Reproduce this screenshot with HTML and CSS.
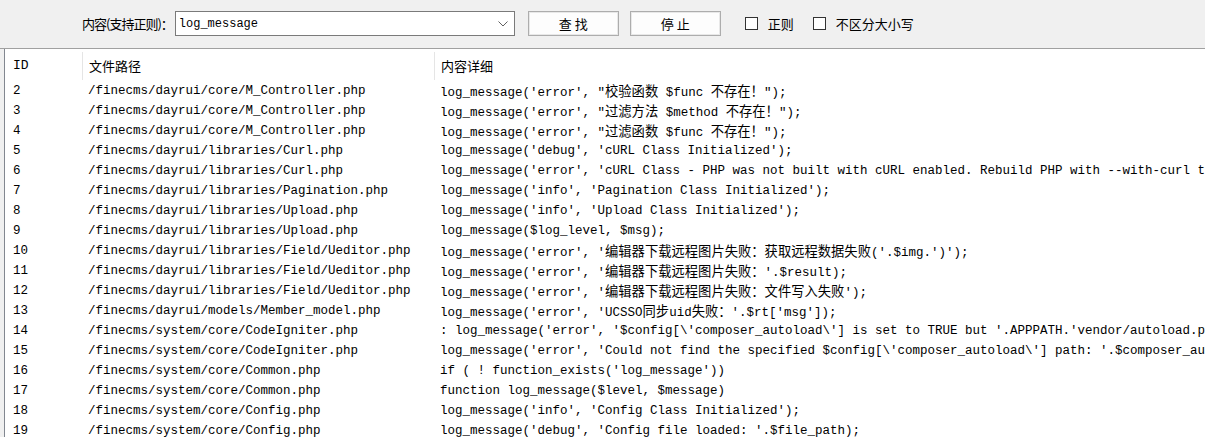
FILE: index.html
```html
<!DOCTYPE html>
<html lang="zh-CN">
<head>
<meta charset="utf-8">
<title>搜索</title>
<link rel="stylesheet" href="styles.css">
</head>
<body>
<div class="toolbar">
  <label class="label">内容(支持正则)：</label>
  <div class="combo">
    <span class="combo-text">log_message</span>
    <svg class="combo-arrow" width="10" height="6" viewBox="0 0 10 6"><path d="M0.5 0.5 L5 5 L9.5 0.5" fill="none" stroke="#606060" stroke-width="1"/></svg>
  </div>
  <button class="btn">查 找</button>
  <button class="btn">停 止</button>
  <span class="check"><span class="box"></span>正则</span>
  <span class="check"><span class="box"></span>不区分大小写</span>
</div>
<div class="list">
  <div class="row head">
    <div class="c id">ID</div>
    <div class="c path sep">文件路径</div>
    <div class="c content sep">内容详细</div>
  </div>
  <div class="row"><div class="c id">2</div><div class="c path">/finecms/dayrui/core/M_Controller.php</div><div class="c content">log_message('error', "<span class="cjk">校验函数</span> $func <span class="cjk">不存在！</span>");</div></div>
  <div class="row"><div class="c id">3</div><div class="c path">/finecms/dayrui/core/M_Controller.php</div><div class="c content">log_message('error', "<span class="cjk">过滤方法</span> $method <span class="cjk">不存在！</span>");</div></div>
  <div class="row"><div class="c id">4</div><div class="c path">/finecms/dayrui/core/M_Controller.php</div><div class="c content">log_message('error', "<span class="cjk">过滤函数</span> $func <span class="cjk">不存在！</span>");</div></div>
  <div class="row"><div class="c id">5</div><div class="c path">/finecms/dayrui/libraries/Curl.php</div><div class="c content">log_message('debug', 'cURL Class Initialized');</div></div>
  <div class="row"><div class="c id">6</div><div class="c path">/finecms/dayrui/libraries/Curl.php</div><div class="c content">log_message('error', 'cURL Class - PHP was not built with cURL enabled. Rebuild PHP with --with-curl to use cURL.');</div></div>
  <div class="row"><div class="c id">7</div><div class="c path">/finecms/dayrui/libraries/Pagination.php</div><div class="c content">log_message('info', 'Pagination Class Initialized');</div></div>
  <div class="row"><div class="c id">8</div><div class="c path">/finecms/dayrui/libraries/Upload.php</div><div class="c content">log_message('info', 'Upload Class Initialized');</div></div>
  <div class="row"><div class="c id">9</div><div class="c path">/finecms/dayrui/libraries/Upload.php</div><div class="c content">log_message($log_level, $msg);</div></div>
  <div class="row"><div class="c id">10</div><div class="c path">/finecms/dayrui/libraries/Field/Ueditor.php</div><div class="c content">log_message('error', '<span class="cjk">编辑器下载远程图片失败：获取远程数据失败</span>('.$img.')');</div></div>
  <div class="row"><div class="c id">11</div><div class="c path">/finecms/dayrui/libraries/Field/Ueditor.php</div><div class="c content">log_message('error', '<span class="cjk">编辑器下载远程图片失败：</span>'.$result);</div></div>
  <div class="row"><div class="c id">12</div><div class="c path">/finecms/dayrui/libraries/Field/Ueditor.php</div><div class="c content">log_message('error', '<span class="cjk">编辑器下载远程图片失败：文件写入失败</span>');</div></div>
  <div class="row"><div class="c id">13</div><div class="c path">/finecms/dayrui/models/Member_model.php</div><div class="c content">log_message('error', 'UCSSO<span class="cjk">同步</span>uid<span class="cjk">失败：</span>'.$rt['msg']);</div></div>
  <div class="row"><div class="c id">14</div><div class="c path">/finecms/system/core/CodeIgniter.php</div><div class="c content">: log_message('error', '$config[\'composer_autoload\'] is set to TRUE but '.APPPATH.'vendor/autoload.php was not found.');</div></div>
  <div class="row"><div class="c id">15</div><div class="c path">/finecms/system/core/CodeIgniter.php</div><div class="c content">log_message('error', 'Could not find the specified $config[\'composer_autoload\'] path: '.$composer_autoload);</div></div>
  <div class="row"><div class="c id">16</div><div class="c path">/finecms/system/core/Common.php</div><div class="c content">if ( ! function_exists('log_message'))</div></div>
  <div class="row"><div class="c id">17</div><div class="c path">/finecms/system/core/Common.php</div><div class="c content">function log_message($level, $message)</div></div>
  <div class="row"><div class="c id">18</div><div class="c path">/finecms/system/core/Config.php</div><div class="c content">log_message('info', 'Config Class Initialized');</div></div>
  <div class="row"><div class="c id">19</div><div class="c path">/finecms/system/core/Config.php</div><div class="c content">log_message('debug', 'Config file loaded: '.$file_path);</div></div>
</div>
</body>
</html>
```
FILE: styles.css
```css
html, body {
  margin: 0;
  padding: 0;
  background: #f0f0f0;
  overflow: hidden;
  width: 1205px;
  height: 437px;
}
body {
  font-family: "Noto Sans CJK SC", "Noto Sans", sans-serif;
  font-size: 13px;
  color: #000;
}
.toolbar {
  height: 49px;
  display: flex;
  align-items: center;
  padding-left: 82px;
  padding-bottom: 1px;
  box-sizing: border-box;
  border-bottom: 1px solid #a0a0a0;
}
.label {
  font-size: 13px;
  letter-spacing: -1px;
  margin-right: 2px;
}
.combo {
  width: 329px;
  height: 23px;
  border: 1px solid #7a7a7a;
  background: #fff;
  display: flex;
  align-items: center;
  justify-content: space-between;
  padding: 0 6px 0 3px;
  margin-right: 13px;
}
.combo-text {
  font-family: "Liberation Mono", monospace;
  font-size: 12px;
}
.btn {
  width: 91px;
  height: 25px;
  border: 1px solid #adadad;
  background: #fdfdfd;
  box-shadow: inset 0 0 0 1px #e8e8e8;
  font-family: "Noto Sans CJK SC", sans-serif;
  font-size: 13px;
  padding: 0;
  margin-right: 11px;
  color: #000;
}
.check {
  display: flex;
  align-items: center;
  margin-left: 13px;
  margin-right: 5px;
  font-size: 13px;
}
.check + .check {
  margin-left: 14px;
}
.box {
  width: 11px;
  height: 11px;
  border: 1px solid #333;
  background: #fff;
  margin-right: 10px;
}
.list {
  margin-left: 4px;
  border-left: 1px solid #828790;
  background: #fff;
  height: 388px;
  overflow: hidden;
}
.row {
  display: grid;
  grid-template-columns: 77px 352px 1000px;
  height: 20px;
  white-space: nowrap;
}
.row.head {
  height: 32px;
}
.c {
  overflow-x: clip;
  overflow-y: visible;
  font-family: "Liberation Mono", "Noto Sans CJK SC", monospace;
  font-size: 12.5px;
  height: 20px;
  line-height: 20px;
  padding-left: 6px;
}
.id {
  padding-left: 8px;
}
.cjk {
  font-family: "Noto Sans CJK SC", sans-serif;
  font-size: 13.3px;
  line-height: 20px;
}
.head .c {
  font-family: "Noto Sans CJK SC", sans-serif;
  font-size: 13px;
  height: 28px;
  line-height: 28px;
  margin-top: 3px;
}
.head .id {
  font-family: "Liberation Mono", monospace;
  padding-left: 8px;
}
.head .sep {
  border-left: 1px solid #e5e5e5;
}
```
